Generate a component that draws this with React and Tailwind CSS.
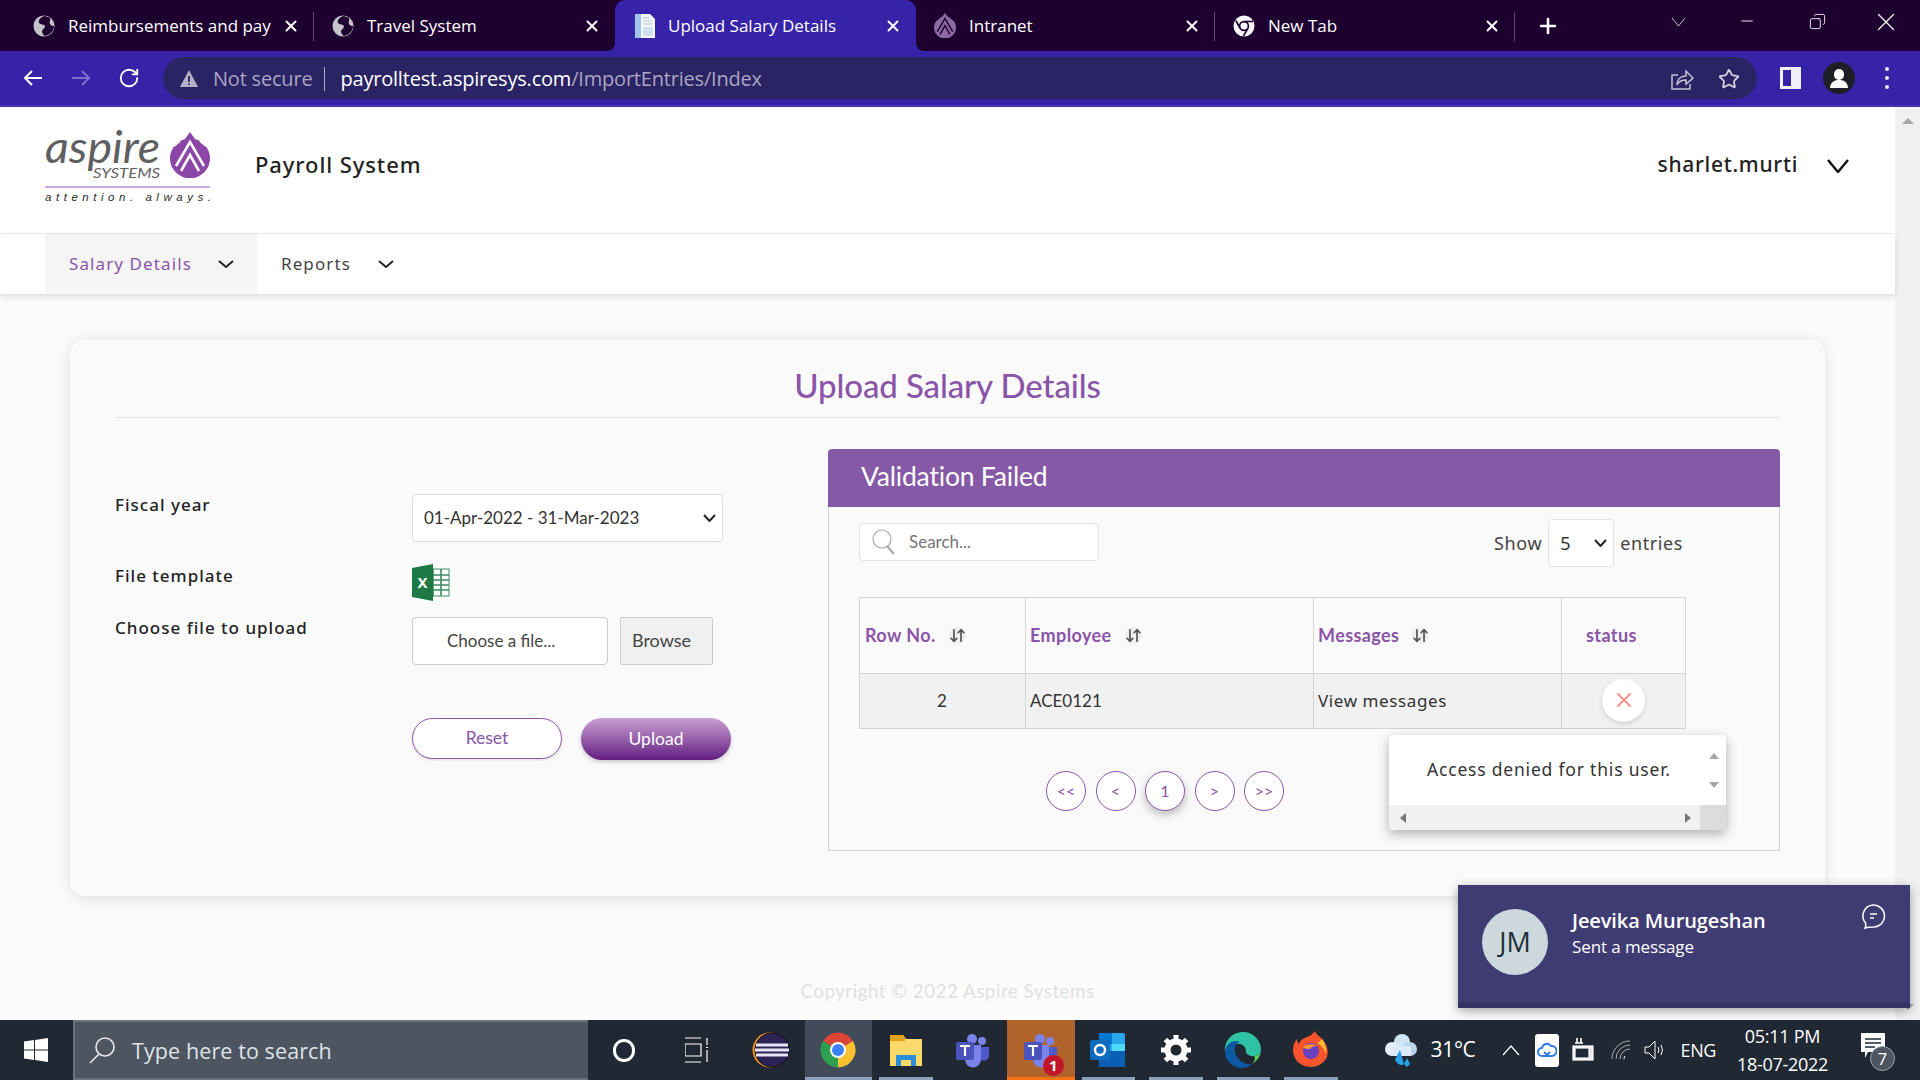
import React from 'react';
import { ArrowDownUp, Copy, Minus, Plus, RotateCw, Star, X } from 'lucide-react';

const tabs = [
  { title: 'Reimbursements and payroll', icon: 'globe', width: 'w-[299px]', sep: true, clip: true },
  { title: 'Travel System', icon: 'globe', width: 'w-[301px]', sep: false },
  { title: 'Upload Salary Details', icon: 'doc', width: 'w-[301px]', active: true },
  { title: 'Intranet', icon: 'aspire', width: 'w-[299px]', sep: true },
  { title: 'New Tab', icon: 'chrome', width: 'w-[300px]', sep: true },
];

// thin open chevron, the lucide one is too narrow for this page
function Chevron({ w = 16, h = 8, stroke = 2, color = '#222', className = '' }) {
  return (
    <svg width={w} height={h} viewBox={`0 0 ${w} ${h}`} className={`shrink-0 ${className}`} fill="none" stroke={color} strokeWidth={stroke}>
      <path d={`M1 1L${w / 2} ${h - 1}L${w - 1} 1`} />
    </svg>
  );
}

function GlobeIcon() {
  return (
    <svg width="22" height="22" viewBox="0 0 22 22">
      <circle cx="11" cy="11" r="10.5" fill="#c4c4ca" />
      <path d="M11 1 C7 3 5 5 6 8 C8 10 11 9 12 11 C12 14 9 14 9 17 C10 20 12 21 12 21 C17 20 21 16 21 11 C20 11 18 11 17 9 C16 6 18 5 17 3 C15 2 13 1 11 1Z" fill="#1e0030" />
    </svg>
  );
}

function DocIcon() {
  return (
    <svg width="24" height="26" viewBox="0 0 24 26">
      <path d="M2 1h15l5 5v19H2z" fill="#f4f6fa" />
      <rect x="2" y="1" width="6" height="24" fill="#9fc2e6" />
      <rect x="10" y="14" width="10" height="9" fill="#cfe0f2" />
      <path d="M10 5h6M10 8h9M10 11h9" stroke="#b8c4d4" strokeWidth="1.2" />
    </svg>
  );
}

function AspireMark({ size = 24, color = '#8c46a8', cut = '#ffffff' }) {
  return (
    <svg width={size} height={size * 1.15} viewBox="0 0 40 46">
      <path d="M20 0 L25 7 A20 20 0 1 1 15 7 Z" fill={color} />
      <path d="M6 34 L20 10 L34 34" fill="none" stroke={cut} strokeWidth="2.6" />
      <path d="M11 39 L20 23 L29 39" fill="none" stroke={cut} strokeWidth="2.6" />
      <path d="M4 14 L10 9 M36 14 L30 9" stroke={cut} strokeWidth="2" />
    </svg>
  );
}

function ChromeMono() {
  return (
    <svg width="22" height="22" viewBox="0 0 22 22">
      <circle cx="11" cy="11" r="10.5" fill="#f5f5f5" />
      <circle cx="11" cy="11" r="4.4" fill="#f5f5f5" stroke="#1e0030" strokeWidth="1.6" />
      <path d="M11 6.5 H20 M7 13 L2.8 5.5 M15 13.4 L10.4 21" stroke="#1e0030" strokeWidth="1.6" />
    </svg>
  );
}

function TabIcon({ name }) {
  if (name === 'globe') return <GlobeIcon />;
  if (name === 'doc') return <DocIcon />;
  if (name === 'aspire') return <AspireMark size={22} color="#8d6aa3" cut="#1e0030" />;
  return <ChromeMono />;
}

function Tab({ tab }) {
  return (
    <div className={`${tab.width} h-full flex items-center relative ${tab.active ? 'bg-[#3623a8] rounded-t-[10px]' : ''}`}>
      <div className="w-[53px] pl-[18px] flex shrink-0">
        <TabIcon name={tab.icon} />
      </div>
      <span className={`text-[17px] text-white whitespace-nowrap overflow-hidden ${tab.clip ? 'w-[203px]' : ''}`}>{tab.title}</span>
      <X size={18} strokeWidth={2.6} className="absolute right-[14px] top-[17px] text-white" />
      {tab.sep && <span className="absolute right-0 top-[12px] h-[29px] w-px bg-[#5c4a6c]" />}
      {tab.active && (
        <>
          <span className="absolute -left-[8px] bottom-0 w-[8px] h-[8px] bg-[#3623a8]"><span className="block w-full h-full bg-[#1e0030] rounded-br-[8px]" /></span>
          <span className="absolute -right-[8px] bottom-0 w-[8px] h-[8px] bg-[#3623a8]"><span className="block w-full h-full bg-[#1e0030] rounded-bl-[8px]" /></span>
        </>
      )}
    </div>
  );
}

function BrowserChrome() {
  return (
    <div className="font-['Open_Sans',sans-serif] shrink-0">
      <div className="h-[51px] bg-[#1e0030] flex pl-[15px] relative">
        {tabs.map((t) => <Tab key={t.title} tab={t} />)}
        <Plus size={24} strokeWidth={2.6} className="text-white ml-[21px] mt-[14px]" />
        <Chevron w={15} h={10} stroke={1} color="#cbbfd6" className="ml-[111px] mt-[17px]" />
        <Minus size={18} strokeWidth={1.2} className="text-white ml-[52px] mt-[12px]" />
        <Copy size={17} strokeWidth={1.2} className="text-white ml-[53px] mt-[13px] -scale-x-100" />
        <X size={30} strokeWidth={1} className="text-white ml-[45px] mt-[7px]" />
      </div>
      <div className="h-[56px] bg-[#3623a8] border-b-2 border-[#4a33b4] flex items-center pl-[22px] pr-[31px]">
        <svg width="22" height="22" viewBox="0 0 22 22" className="shrink-0"><path d="M20 11H3M10 4l-7 7 7 7" fill="none" stroke="#fff" strokeWidth="2" /></svg>
        <svg width="22" height="22" viewBox="0 0 22 22" className="shrink-0 ml-[26px]"><path d="M2 11h17M12 4l7 7-7 7" fill="none" stroke="#7d6fd0" strokeWidth="2" /></svg>
        <RotateCw size={22} strokeWidth={2} className="text-white shrink-0 ml-[26px]" />
        <div className="ml-[23px] flex-1 h-[42px] rounded-full bg-[#2b2464] flex items-center pl-[17px] pr-[17px] pt-[1px] text-[20px] tracking-[-0.2px]">
          <svg width="18" height="17" viewBox="0 0 18 17" className="shrink-0"><path d="M9 0l9 17H0z" fill="#b4b0c6" /><path d="M9 6v6M9 13.5v1.6" stroke="#2b2464" strokeWidth="1.8" /></svg>
          <span className="ml-[15px] text-[#a9a5c2]">Not secure</span>
          <span className="ml-[12px] w-px h-[24px] bg-[#a9a5c2]" />
          <span className="ml-[15px] text-white">payrolltest.aspiresys.com</span>
          <span className="text-[#a9a5c2]">/ImportEntries/Index</span>
          <svg width="24" height="24" viewBox="0 0 24 24" fill="none" stroke="#c4c1d4" strokeWidth="1.5" className="ml-auto shrink-0">
            <path d="M8 8H2v14h18v-5" />
            <path d="M7 18c0-6 4-9 9-9V4l7 7-7 6v-4c-4 0-7 1-9 5z" />
          </svg>
          <Star size={22} strokeWidth={2} className="text-[#d4d2e0] ml-[24px] shrink-0" />
        </div>
        <div className="ml-[23px] w-[21px] h-[22px] border-y-[3px] border-l-[3px] border-r-[10px] border-[#f0eefa] bg-[#3623a8] shrink-0" />
        <div className="ml-[22px] w-[32px] h-[32px] rounded-full bg-[#1e1e26] shrink-0 overflow-hidden relative">
          <span className="absolute left-[11px] top-[7px] w-[10px] h-[11px] rounded-full bg-white" />
          <span className="absolute left-[7px] top-[18px] w-[18px] h-[8px] rounded-t-[8px] bg-white" />
        </div>
        <div className="ml-[30px] flex flex-col gap-[5px] shrink-0">
          <span className="w-[4px] h-[4px] rounded-full bg-[#e8e6f4]" />
          <span className="w-[4px] h-[4px] rounded-full bg-[#e8e6f4]" />
          <span className="w-[4px] h-[4px] rounded-full bg-[#e8e6f4]" />
        </div>
      </div>
    </div>
  );
}

function Logo() {
  return (
    <svg width="170" height="80" viewBox="0 0 170 80" className="shrink-0 overflow-visible">
      <text x="0" y="33" fontFamily="Lato, sans-serif" fontStyle="italic" fontWeight="400" fontSize="45" fill="#5f5f62" textLength="115" lengthAdjust="spacingAndGlyphs">aspire</text>
      <text x="48" y="48" fontFamily="Lato, sans-serif" fontStyle="italic" fontSize="12.5" fill="#5f5f62" textLength="67" lengthAdjust="spacingAndGlyphs">SYSTEMS</text>
      <g transform="translate(125,2)"><AspireMark size={40} /></g>
      <rect x="0" y="56" width="165" height="2" fill="#c9a9dc" />
      <text x="0" y="71" fontFamily="'Liberation Sans', sans-serif" fontStyle="italic" fontSize="11.5" fill="#2b2b2b" textLength="166">attention. always.</text>
    </svg>
  );
}

function Header() {
  return (
    <div>
      <div className="h-[127px] bg-white border-b border-[#ececec] flex items-center pl-[45px] pr-[46px] pb-[10px] font-['Noto_Sans',sans-serif] text-[#222]">
        <div className="mt-[9px] flex"><Logo /></div>
        <span className="ml-[40px] -mt-[2px] text-[22px] font-medium tracking-[0.9px]">Payroll System</span>
        <span className="ml-auto text-[21px] font-medium tracking-[0.7px]">sharlet.murti</span>
        <Chevron w={22} h={14} stroke={2.4} color="#111" className="ml-[29px] mt-[2px]" />
      </div>
      <div className="h-[60px] bg-white pl-[45px] flex shadow-[0_3px_6px_rgba(0,0,0,0.12)] relative font-['Noto_Sans',sans-serif] text-[17px] tracking-[1.1px]">
        <div className="w-[212px] h-[59px] bg-[#f5f5f5] flex items-center pl-[24px] text-[#8a55a8]">
          Salary Details
          <Chevron className="ml-[26px]" />
        </div>
        <div className="flex items-center pl-[24px] text-[#444]">
          Reports
          <Chevron className="ml-[27px]" />
        </div>
      </div>
    </div>
  );
}

function ExcelIcon() {
  return (
    <svg width="38" height="37" viewBox="0 0 38 37">
      <rect x="14" y="5" width="23" height="27" fill="#fff" stroke="#7fb598" strokeWidth="1.5" />
      <path d="M21 5v27M29 5v27M14 11h23M14 16h23M14 21h23M14 26h23" stroke="#3d8a60" strokeWidth="1.6" />
      <path d="M21 0L0 4v29l21 4z" fill="#1d7a45" />
      <text x="5.5" y="24" fontFamily="'Noto Sans', sans-serif" fontSize="15" fontWeight="700" fill="#fff">X</text>
    </svg>
  );
}

function UploadForm() {
  return (
    <div className="w-[713px] shrink-0 font-['Noto_Sans',sans-serif] text-[17px] font-medium tracking-[1px] text-[#222]">
      <div className="mt-[31px] flex">
        <div className="w-[297px] -mt-[2px]">Fiscal year</div>
        <div className="relative">
          <select defaultValue="a" className="appearance-none block w-[311px] h-[48px] bg-white border border-[#ddd] rounded-[4px] pl-[11px] font-['Lato',sans-serif] font-normal tracking-normal text-[17px] text-[#333]">
            <option value="a">01-Apr-2022 - 31-Mar-2023</option>
          </select>
          <Chevron w={13} h={8} className="absolute right-[7px] top-[20px] pointer-events-none" />
        </div>
      </div>
      <div className="mt-[22px] flex h-[36px]">
        <div className="w-[297px] -mt-[1px]">File template</div>
        <ExcelIcon />
      </div>
      <div className="mt-[17px] flex">
        <div className="w-[297px] -mt-[2px]">Choose file to upload</div>
        <div className="w-[196px] h-[48px] bg-white border border-[#ccc] rounded-[4px] flex items-center pl-[34px] font-['Lato',sans-serif] font-normal tracking-normal text-[17px] text-[#444]">Choose a file...</div>
        <div className="ml-[12px] w-[93px] h-[48px] bg-[#f0f0f0] border border-[#ccc] rounded-[2px] flex items-center pl-[11px] pb-[2px] font-['Lato',sans-serif] font-normal tracking-normal text-[18px] text-[#444]">Browse</div>
      </div>
      <div className="mt-[53px] ml-[297px] flex gap-[19px] font-['Lato',sans-serif] font-normal tracking-normal text-[17.5px]">
        <button className="w-[150px] h-[41px] rounded-full bg-white border border-[#8a55a8] text-[#8a55a8] shadow-[0_1px_3px_rgba(0,0,0,0.12)]">Reset</button>
        <button className="w-[150px] h-[42px] rounded-full bg-gradient-to-b from-[#c99fd2] to-[#651a80] text-white shadow-[0_2px_4px_rgba(0,0,0,0.2)]">Upload</button>
      </div>
    </div>
  );
}

function SortHead({ label, className }) {
  return (
    <th className={`border border-[#d5d5d5] font-bold text-[#8a55a8] text-left ${className}`}>
      <span className="flex items-center gap-[13px]">
        {label}
        <ArrowDownUp size={17} strokeWidth={2.4} className="text-[#555] bg-[#efefef] rounded-full" />
      </span>
    </th>
  );
}

function ResultsPanel() {
  const pages = ['<<', '<', '1', '>', '>>'];
  return (
    <div className="flex-1 min-w-0 relative font-['Lato',sans-serif] text-[#333]">
      <div className="h-[58px] bg-[#8659a6] rounded-t-[4px] flex items-center pl-[33px] pb-[2px] text-[26.5px] text-white tracking-[-0.2px]">Validation Failed</div>
      <div className="h-[344px] border border-t-0 border-[#d5d5d5] pl-[30px] pr-[90px]">
        <div className="flex items-center justify-between pt-[12px] h-[60px]">
          <div className="w-[240px] h-[38px] bg-white border border-[#e2e2e2] rounded-[4px] flex items-center pl-[12px] text-[17px] text-[#777] -mt-[2px]">
            <svg width="23" height="26" viewBox="0 0 23 26" fill="none" stroke="#a8a8a8" strokeWidth="1.2" className="shrink-0">
              <circle cx="10" cy="10" r="9" />
              <path d="M15 17l7 8" strokeWidth="2" />
            </svg>
            <span className="ml-[14px]">Search...</span>
          </div>
          <div className="flex items-center text-[18px] tracking-[0.6px] font-['Noto_Sans',sans-serif] text-[#444] mr-[6px]">
            Show
            <div className="relative mx-[6px]">
              <select defaultValue="5" className="appearance-none block w-[66px] h-[48px] bg-white border border-[#e2e2e2] rounded-[4px] pl-[11px] text-[#333]">
                <option value="5">5</option>
              </select>
              <Chevron w={13} h={8} className="absolute right-[7px] top-[20px] pointer-events-none" />
            </div>
            entries
          </div>
        </div>
        <table className="mt-[30px] w-[827px] table-fixed border-collapse text-[17px]">
          <thead>
            <tr className="h-[76px] text-[18px] tracking-[0.4px]">
              <SortHead label="Row No." className="w-[166px] pl-[5px]" />
              <SortHead label="Employee" className="w-[288px] pl-[4px]" />
              <SortHead label="Messages" className="w-[248px] pl-[4px]" />
              <th className="border border-[#d5d5d5] font-bold text-[#8a55a8] text-left pl-[24px]">status</th>
            </tr>
          </thead>
          <tbody>
            <tr className="h-[55px] bg-[#f1f1f1]">
              <td className="border border-[#d5d5d5] text-center pr-[1px] pb-[1px]">2</td>
              <td className="border border-[#d5d5d5] pl-[4px] pb-[1px]">ACE0121</td>
              <td className="border border-[#d5d5d5] pl-[4px] pb-[1px] font-['Noto_Sans',sans-serif] tracking-[0.6px]">View messages</td>
              <td className="border border-[#d5d5d5] pb-[2px]">
                <div className="mx-auto w-[43px] h-[43px] rounded-full bg-white shadow-[0_2px_4px_rgba(0,0,0,0.14)] flex items-center justify-center">
                  <X size={24} strokeWidth={1.8} className="text-[#fb8a80]" />
                </div>
              </td>
            </tr>
          </tbody>
        </table>
        <div className="mt-[42px] ml-[187px] flex gap-[9.5px] text-[16px] text-[#8a55a8]">
          {pages.map((p) => (
            <span key={p} className={`w-[40px] h-[40px] rounded-full border border-[#8a55a8] bg-white flex items-center justify-center ${p === '1' ? 'shadow-[0_4px_8px_rgba(0,0,0,0.25)]' : ''}`}>{p}</span>
          ))}
        </div>
      </div>
      <div className="absolute left-[561px] top-[286px] w-[337px] h-[95px] bg-white rounded-[4px] shadow-[0_4px_12px_rgba(0,0,0,0.3)] overflow-hidden">
        <div className="h-[70px] flex">
          <div className="w-[312px] flex items-center pl-[38px] pb-[2px] whitespace-nowrap font-['Noto_Sans',sans-serif] text-[17.5px] tracking-[0.8px] text-[#333]">Access denied for this user.</div>
          <div className="flex-1 flex flex-col items-center justify-around py-[6px]">
            <span className="w-0 h-0 border-x-[5px] border-x-transparent border-b-[6px] border-b-[#a8a8a8]" />
            <span className="w-0 h-0 border-x-[5px] border-x-transparent border-t-[6px] border-t-[#a8a8a8]" />
          </div>
        </div>
        <div className="h-[25px] bg-[#f1f1f1] flex items-center pl-[11px]">
          <span className="w-0 h-0 border-y-[5px] border-y-transparent border-r-[6px] border-r-[#777]" />
          <span className="ml-[279px] w-0 h-0 border-y-[5px] border-y-transparent border-l-[6px] border-l-[#777]" />
          <span className="ml-auto w-[26px] h-full bg-[#dcdcdc]" />
        </div>
      </div>
    </div>
  );
}

function Toast() {
  return (
    <div className="absolute left-[1458px] top-[885px] w-[452px] h-[123px] bg-[#3f3c73] border-b-[6px] border-[#363365] shadow-[0_3px_10px_rgba(0,0,0,0.35)] flex font-['Open_Sans',sans-serif] text-white">
      <div className="ml-[24px] mt-[24px] w-[66px] h-[66px] rounded-full bg-[#cdd8dd] flex items-center justify-center text-[27px] text-[#1d3038]">JM</div>
      <div className="ml-[24px] mt-[22px]">
        <div className="text-[20px] font-semibold tracking-[-0.1px] leading-[28px]">Jeevika Murugeshan</div>
        <div className="text-[17px] tracking-[-0.1px] leading-[24px]">Sent a message</div>
      </div>
      <svg width="26" height="26" viewBox="0 0 26 26" className="absolute right-[24px] top-[18px]" fill="none" stroke="#fff" strokeWidth="1.5">
        <path d="M13 2a11 11 0 0 1 1 22c-3 0-6 0-9 1 1-2 1-3 .5-5A11 11 0 0 1 13 2z" />
        <path d="M10 11h7M10 15h4" />
      </svg>
    </div>
  );
}

function TeamsIcon({ badge }) {
  return (
    <span className="relative w-[38px] h-[38px] block">
      <svg width="38" height="38" viewBox="0 0 38 38">
        <circle cx="28" cy="10" r="4" fill="#7b83eb" />
        <path d="M24 16h11v10a6 6 0 0 1-11 0z" fill="#5059c9" />
        <circle cx="18" cy="8" r="5" fill="#7b83eb" />
        <path d="M10 14h17v14a8 8 0 0 1-16 1z" fill="#7b83eb" />
        <rect x="2" y="11" width="18" height="18" rx="2" fill="#4b53bc" />
        <path d="M6 15h10M11 15v10" stroke="#fff" strokeWidth="2.2" />
      </svg>
      {badge && <span className="absolute right-[-4px] bottom-[-7px] w-[21px] h-[21px] rounded-full bg-[#c4162a] text-white text-[15px] font-bold flex items-center justify-center">1</span>}
    </span>
  );
}

const appIcons = [
  {
    key: 'eclipse', node: (
      <svg width="38" height="36" viewBox="0 0 38 36">
        <circle cx="18" cy="18" r="17.5" fill="#f7941e" />
        <circle cx="20" cy="18" r="17" fill="#2c2255" stroke="#111" />
        <path d="M4 13h32M3 18h34M4 23h32" stroke="#e8e6f4" strokeWidth="3" />
      </svg>
    ),
  },
  {
    key: 'chrome', active: true, node: (
      <svg width="36" height="36" viewBox="0 0 36 36">
        <path d="M18 18L3 9A17.5 17.5 0 0 1 33 9z" fill="#db4437" />
        <path d="M18 18L33 9A17.5 17.5 0 0 1 18 35.5z" fill="#fbc02d" />
        <path d="M18 18L18 35.5A17.5 17.5 0 0 1 3 9z" fill="#2e9e4f" />
        <circle cx="18" cy="18" r="8" fill="#fff" />
        <circle cx="18" cy="18" r="6" fill="#3b82f6" />
      </svg>
    ),
  },
  {
    key: 'folder', line: true, node: (
      <svg width="34" height="34" viewBox="0 0 34 34">
        <path d="M1 2h13l3 4h16v27H1z" fill="#fcd96b" />
        <path d="M1 2h13l2 3v3H1z" fill="#e0a31a" />
        <path d="M7 22h20v11h-5v-6H12v6H7z" fill="#2a8fd8" />
      </svg>
    ),
  },
  { key: 'teams', node: <TeamsIcon /> },
  { key: 'teams2', orange: true, node: <TeamsIcon badge /> },
  {
    key: 'outlook', line: true, node: (
      <svg width="38" height="38" viewBox="0 0 38 38">
        <rect x="10" y="2" width="26" height="34" rx="2" fill="#28a8ea" />
        <rect x="10" y="2" width="13" height="11" fill="#0078d4" />
        <rect x="23" y="13" width="13" height="11" fill="#50d9ff" />
        <path d="M10 20l26 0v14a2 2 0 0 1-2 2H12a2 2 0 0 1-2-2z" fill="#0a5fb4" />
        <rect x="1" y="9" width="20" height="20" rx="2" fill="#0f6cbd" />
        <circle cx="11" cy="19" r="5" fill="none" stroke="#fff" strokeWidth="2.4" />
      </svg>
    ),
  },
  {
    key: 'gear', line: true, node: (
      <svg width="30" height="30" viewBox="0 0 30 30">
        <circle cx="15" cy="15" r="8.5" fill="none" stroke="#fff" strokeWidth="6" />
        <path d="M15 0v6M15 24v6M0 15h6M24 15h6M4.4 4.4l4.2 4.2M21.4 21.4l4.2 4.2M4.4 25.6l4.2-4.2M21.4 8.6l4.2-4.2" stroke="#fff" strokeWidth="5" />
      </svg>
    ),
  },
  {
    key: 'edge', line: true, node: (
      <svg width="38" height="38" viewBox="0 0 38 38">
        <path d="M19 1a18 18 0 0 1 18 18c0 5-5 7-10 6-4-1-5-3-5-5 0-4-4-8-10-7C6 14 2 19 1 21 0 10 8 1 19 1z" fill="#2fc3a5" />
        <path d="M1 20c1-8 9-12 15-9-6 1-7 9-3 15 3 5 9 8 15 7-4 3-7 4-10 4C9 37 1 30 1 20z" fill="#0c59a4" />
        <path d="M37 19c0 4-3 6-7 6 2 1 1 5-2 8 5-3 9-8 9-14z" fill="#5bd24f" />
      </svg>
    ),
  },
  {
    key: 'firefox', line: true, node: (
      <svg width="36" height="38" viewBox="0 0 36 38">
        <path d="M18 36C8 36 0 29 0 19c0-5 2-9 4-11 0 3 1 4 2 5 1-4 5-6 8-7C17 5 20 3 22 0c1 4 5 5 8 9 4 5 6 11 4 17-3 6-9 10-16 10z" fill="#f7542e" />
        <path d="M29 8c3 4 5 9 4 15-2-6-5-9-9-11 2-1 3-2 5-4z" fill="#ffbd2e" />
        <circle cx="18" cy="20" r="8" fill="#6a3fc0" />
        <path d="M10 16c3-3 10-4 14-1-4 0-6 1-7 3-2 0-5 0-7-2z" fill="#ff9a2e" />
      </svg>
    ),
  },
];

function Taskbar() {
  return (
    <div className="h-[60px] shrink-0 bg-[#202833] flex font-['Open_Sans',sans-serif] text-white relative">
      <div className="w-[73px] flex items-center justify-center shrink-0 pr-[2px]">
        <svg width="24" height="24" viewBox="0 0 24 24" fill="#fff"><path d="M0 3.5l10-1.4V11.4H0zM11 2l13-2V11.4H11zM0 12.5h10v9.4L0 20.5zM11 12.5h13V24l-13-2z" /></svg>
      </div>
      <div className="w-[515px] shrink-0 bg-[#4d5560] border-[2px] border-[#6b727b] border-r-0 flex items-center pl-[13px] text-[21.5px] text-[#dfe3e8]">
        <svg width="28" height="28" viewBox="0 0 28 28" fill="none" stroke="#e4e7ea" strokeWidth="1.6"><circle cx="17" cy="11" r="9" /><path d="M11 18L2 27" /></svg>
        <span className="ml-[16px] mt-[2px] tracking-[0.1px]">Type here to search</span>
      </div>
      <div className="w-[71px] flex items-center justify-center shrink-0">
        <span className="w-[22px] h-[23px] rounded-full border-[3px] border-white" />
      </div>
      <div className="w-[78px] flex items-center justify-center shrink-0 pr-[2px]">
        <svg width="24" height="26" viewBox="0 0 24 26" fill="none" stroke="#fff" strokeWidth="1.2"><path d="M0 1h16M0 7h16v12H0zM0 25h16M22 1v7M22 13v12" /><path d="M22 10v1" strokeWidth="2" /></svg>
      </div>
      <div className="flex shrink-0">
        {appIcons.map((app) => (
          <div key={app.key} className={`relative w-[67.5px] flex items-center justify-center ${app.active ? 'bg-[#414b59]' : ''} ${app.orange ? 'bg-[#b0632a]' : ''}`}>
            {app.node}
            {app.active && <span className="absolute bottom-0 inset-x-0 h-[3px] bg-[#8da0bc]" />}
            {app.line && <span className="absolute bottom-0 inset-x-[7px] h-[3px] bg-[#8da0bc]" />}
            {app.orange && <span className="absolute bottom-0 inset-x-0 h-[3px] bg-[#f97316]" />}
          </div>
        ))}
      </div>
      <div className="flex-1 flex items-center pl-[38px]">
        <svg width="36" height="36" viewBox="0 0 36 36">
          <circle cx="19" cy="10" r="8" fill="#cfe4f5" />
          <circle cx="9" cy="17" r="7" fill="#e6f0f8" />
          <circle cx="27" cy="17" r="7" fill="#b8d4ea" />
          <rect x="8" y="14" width="20" height="10" fill="#dcebf6" />
          <path d="M12 28q3-7 5-10l4 14q-5 3-9-4zM24 26l3 6-3 3-3-3z" fill="#27a2e8" />
        </svg>
        <span className="ml-[12px] text-[21px] tracking-[-0.3px]">31°C</span>
        <svg width="20" height="12" viewBox="0 0 20 12" fill="none" stroke="#fff" strokeWidth="1.2" className="ml-[25px]"><path d="M2 11l8-9 8 9" /></svg>
        <span className="ml-[14px] w-[24px] h-[33px] bg-white rounded-[3px] flex items-center justify-center">
          <svg width="20" height="18" viewBox="0 0 20 18" fill="none" stroke="#2f7be8" strokeWidth="2"><path d="M5 15a4 4 0 0 1 0-8 5 5 0 0 1 9-2 5 5 0 0 1 1 10z" /><path d="M7 11l3 3 3-3" /></svg>
        </span>
        <svg width="24" height="26" viewBox="0 0 24 26" fill="none" stroke="#fff" strokeWidth="1.2" className="ml-[12px]"><rect x="2" y="9" width="20" height="14" fill="#e8e8e8" /><rect x="4" y="11" width="14" height="10" fill="#202833" /><path d="M6 1v5M10 1v5M4 6h8" strokeWidth="1.6" /></svg>
        <svg width="22" height="22" viewBox="0 0 22 22" fill="none" stroke="#fff" strokeWidth="1" className="ml-[15px]"><path d="M2 20A18 18 0 0 1 20 2M6 20A14 14 0 0 1 20 6" opacity="0.6" /><path d="M10 20A10 10 0 0 1 20 10" opacity="0.6" /><path d="M14 20a6 6 0 0 1 1-3" /></svg>
        <svg width="24" height="24" viewBox="0 0 24 24" fill="none" stroke="#fff" strokeWidth="1" className="ml-[11px]"><path d="M2 9h4l6-6v18l-6-6H2z" /><path d="M15 9q2 3 0 6M18 7q3 5 0 10" /></svg>
        <span className="ml-[14px] text-[18px] tracking-[-0.4px]">ENG</span>
        <div className="ml-[21px] flex flex-col items-center text-[18px] leading-[28px] tracking-[-0.3px]">
          <span>05:11 PM</span>
          <span>18-07-2022</span>
        </div>
        <div className="ml-[32px] relative w-[32px] h-[36px]">
          <svg width="26" height="28" viewBox="0 0 26 28"><path d="M1 1h24v19H8l-3 6v-6H1z" fill="#fff" /><path d="M5 7h16M5 11h16M5 15h10" stroke="#202833" strokeWidth="1.4" /></svg>
          <span className="absolute left-[10px] top-[14px] w-[25px] h-[25px] rounded-full bg-[#4d5560] border border-[#9aa2ac] flex items-center justify-center text-[17px]">7</span>
        </div>
      </div>
    </div>
  );
}

export default function App() {
  return (
    <div className="relative w-[1920px] h-[1080px] overflow-hidden flex flex-col bg-[#fbfbfb] font-['Lato',sans-serif]">
      <BrowserChrome />

      <div className="flex-1 flex min-h-0">
        <div className="flex-1 min-w-0 flex flex-col">
          <Header />
          <div className="flex-1 px-[70px] pt-[46px]">
            {/* Upload card */}
            <div className="h-[556px] bg-[#fafafa] rounded-[14px] shadow-[0_2px_14px_rgba(0,0,0,0.12)] px-[45px]">
              <h1 className="h-[78px] flex items-center justify-center pt-[14px] border-b border-[#e5e5e5] text-[33px] font-medium text-[#8a55a8] tracking-[-0.1px]">Upload Salary Details</h1>
              <div className="flex pt-[31px]">
                <div className="w-[713px] shrink-0 pt-[14px]">
                  <UploadForm />
                </div>
                <ResultsPanel />
              </div>
            </div>
            <div className="mt-[81px] text-center text-[18.8px] tracking-[0.5px] text-[#e0e0e0]">Copyright © 2022 Aspire Systems</div>
          </div>
        </div>
        {/* Page scrollbar */}
        <div className="w-[25px] shrink-0 bg-[#f1f1f1] flex flex-col items-center justify-between pt-[11px] pb-[10px]">
          <span className="w-0 h-0 border-x-[6px] border-x-transparent border-b-[6px] border-b-[#a8a8a8]" />
          <span className="w-0 h-0 border-x-[6px] border-x-transparent border-t-[6px] border-t-[#a8a8a8]" />
        </div>
      </div>

      <Taskbar />
      <Toast />
    </div>
  );
}
